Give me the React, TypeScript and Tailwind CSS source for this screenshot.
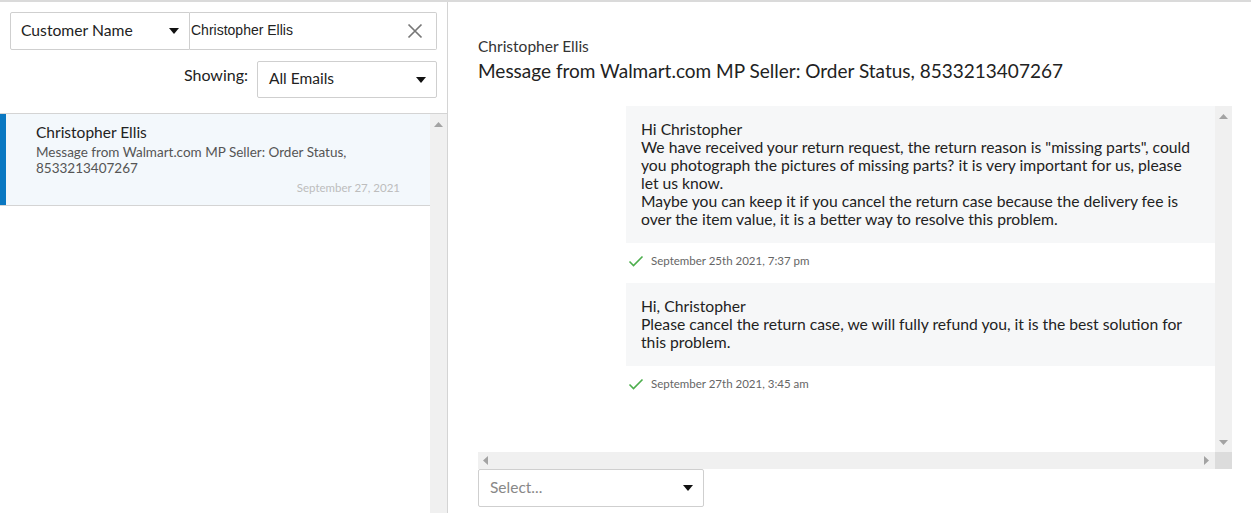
import React from "react"

function Caret({ className = "" }: { className?: string }) {
  return (
    <svg width="10" height="6" viewBox="0 0 10 6" className={className}>
      <path d="M0 0h10L5 6z" fill="#111" />
    </svg>
  )
}

function Check() {
  return (
    <svg width="16" height="12" viewBox="0 0 16 12">
      <path d="M1.5 6.5l4 4L14.5 1.5" fill="none" stroke="#4cae4c" strokeWidth="1.6" />
    </svg>
  )
}

function Tri({ dir }: { dir: "up" | "down" | "left" | "right" }) {
  const d = {
    up: "M0 5h9L4.5 0z",
    down: "M0 0h9L4.5 5z",
    left: "M5 0v9L0 4.5z",
    right: "M0 0v9L5 4.5z",
  }[dir]
  const vert = dir === "up" || dir === "down"
  return (
    <svg width={vert ? 9 : 5} height={vert ? 5 : 9} viewBox={vert ? "0 0 9 5" : "0 0 5 9"}>
      <path d={d} fill="#a3a3a3" />
    </svg>
  )
}

const messages = [
  {
    lines: [
      "Hi Christopher",
      "We have received your return request, the return reason is \"missing parts\", could you photograph the pictures of missing parts? it is very important for us, please let us know.",
      "Maybe you can keep it if you cancel the return case because the delivery fee is over the item value, it is a better way to resolve this problem.",
    ],
    time: "September 25th 2021, 7:37 pm",
  },
  {
    lines: [
      "Hi, Christopher",
      "Please cancel the return case, we will fully refund you, it is the best solution for this problem.",
    ],
    time: "September 27th 2021, 3:45 am",
  },
]

export default function App() {
  return (
    <div className="h-[513px] flex border-t-2 border-[#dadada] bg-white font-['Lato',sans-serif] text-[#222] overflow-hidden">
      {/* left panel */}
      <div className="w-[448px] shrink-0 border-r border-[#d4d4d4] flex flex-col">
        <div className="px-[10px] pt-[10px]">
          <div className="flex h-[38px]">
            <div className="w-[180px] border border-[#cfcfcf] rounded-l-[2px] flex items-center justify-between pl-[10px] pr-[10px]">
              <span className="text-[15.7px] -mt-[1px]">Customer Name</span>
              <Caret />
            </div>
            <div className="flex-1 border border-l-0 border-[#cfcfcf] rounded-r-[2px] flex items-center justify-between pl-[1px] pr-[13px]">
              <span className="text-[14px] font-['Liberation_Sans',sans-serif] -mt-[2px]">Christopher Ellis</span>
              <svg width="16" height="16" viewBox="0 0 16 16">
                <path d="M1.5 1.5l13 13M14.5 1.5l-13 13" stroke="#777" strokeWidth="1.7" />
              </svg>
            </div>
          </div>
          <div className="flex justify-end items-start mt-[11px] gap-[9px]">
            <span className="text-[16px] mt-[2px]">Showing:</span>
            <div className="w-[180px] h-[37px] border border-[#cfcfcf] rounded-[2px] flex items-center justify-between pl-[11px] pr-[10px]">
              <span className="text-[15.5px] -mt-[2px]">All Emails</span>
              <Caret />
            </div>
          </div>
        </div>
        <div className="mt-[15px] border-t border-[#d4d4d4] flex flex-1 min-h-0">
          <div className="flex-1">
            <div className="flex h-[92px] border-b border-[#d4d4d4] bg-[#f3f8fc]">
              <div className="w-[6px] bg-[#0a78c2]" />
              <div className="flex-1 pl-[30px] pr-[30px] pt-[9px]">
                <div className="text-[15.5px] leading-[18px] text-[#222]">Christopher Ellis</div>
                <div className="text-[13.5px] leading-[16px] text-[#555] mt-[3px]">
                  Message from Walmart.com MP Seller: Order Status,
                  <br />
                  8533213407267
                </div>
                <div className="text-[11.5px] leading-[13px] text-[#bdbdbd] text-right mt-[5px]">September 27, 2021</div>
              </div>
            </div>
          </div>
          <div className="w-[17px] bg-[#f0f0f0] flex justify-center pt-[8px]">
            <div className="h-[5px] leading-none">
              <Tri dir="up" />
            </div>
          </div>
        </div>
      </div>

      {/* right panel */}
      <div className="flex-1 pl-[30px] pr-[19px] flex flex-col">
        <div className="pt-[35px]">
          <div className="text-[15.5px] leading-[18px] text-[#333]">Christopher Ellis</div>
          <div className="text-[19px] leading-[24px] mt-[4px] text-[#222]">
            Message from Walmart.com MP Seller: Order Status, 8533213407267
          </div>
        </div>
        <div className="mt-[23px] flex flex-col">
          <div className="flex h-[346px]">
            <div className="flex-1 flex flex-col items-end">
              {messages.map((m, i) => (
                <div key={i} className="w-[589px] mb-[14px]">
                  <div className="bg-[#f6f7f8] pl-[15px] pr-[22px] pt-[14px] pb-[15px] text-[15.7px] leading-[18px] text-[#222]">
                    {m.lines.map((l, j) => (
                      <div key={j}>{l}</div>
                    ))}
                  </div>
                  <div className="flex items-center gap-[7px] mt-[10px] pl-[2px] h-[16px]">
                    <Check />
                    <span className="text-[11.5px] text-[#666]">{m.time}</span>
                  </div>
                </div>
              ))}
            </div>
            <div className="w-[17px] bg-[#f0f0f0] flex flex-col items-center justify-between pt-[8px] pb-[7px]">
              <div className="h-[5px] leading-none">
                <Tri dir="up" />
              </div>
              <div className="h-[5px] leading-none">
                <Tri dir="down" />
              </div>
            </div>
          </div>
          <div className="flex h-[17px]">
            <div className="flex-1 bg-[#f0f0f0] flex items-center justify-between pl-[5px] pr-[6px]">
              <Tri dir="left" />
              <Tri dir="right" />
            </div>
            <div className="w-[17px] bg-[#dcdcdc]" />
          </div>
        </div>
        <div className="w-[226px] h-[38px] border border-[#cfcfcf] rounded-[2px] flex items-center justify-between pl-[11px] pr-[10px]">
          <span className="text-[15.5px] text-[#888]">Select...</span>
          <Caret />
        </div>
      </div>
    </div>
  )
}
